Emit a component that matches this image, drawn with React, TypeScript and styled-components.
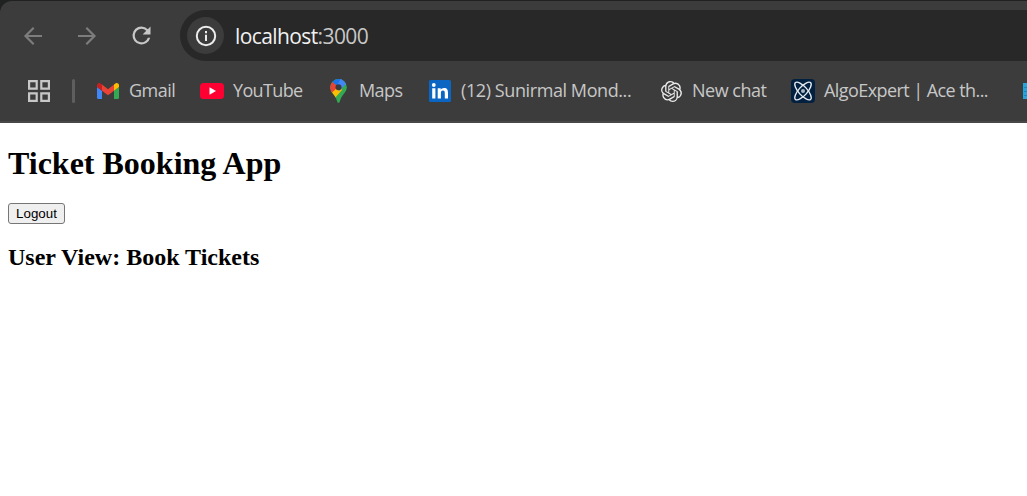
import React from "react";
import styled, { createGlobalStyle } from "styled-components";
import { SiOpenai } from "react-icons/si";

const GlobalStyle = createGlobalStyle`
  html, body { margin: 0; padding: 0; background: #fff; }
  body { overflow: hidden; }
`;

const Window = styled.div`
  width: 100%;
  height: 496px;
  overflow: hidden;
  background: #fff;
`;

const Frame = styled.header`
  height: 123px;
  padding-top: 1px;
  box-sizing: border-box;
  background: #202221;
`;

const Chrome = styled.div`
  height: 122px;
  box-sizing: border-box;
  border-radius: 12px 0 0 0;
  background: #3c3c3c;
  border-bottom: 2px solid #484848;
  overflow: hidden;
`;

const Toolbar = styled.div`
  display: flex;
  align-items: center;
  height: 51px;
  margin-top: 9px;
  padding-left: 20px;
`;

const NavButton = styled.span<{ $active?: boolean }>`
  display: flex;
  flex: none;
  align-items: center;
  justify-content: center;
  width: 26px;
  height: 26px;
  margin-right: 28px;
  color: ${(p) => (p.$active ? "#c7c7c7" : "#7d7d7d")};

  svg { flex: none; }
`;

const AddressBar = styled.div`
  display: flex;
  flex: 1;
  align-items: center;
  height: 51px;
  box-sizing: border-box;
  margin-left: -2px;
  padding-left: 7px;
  border-radius: 26px 0 0 26px;
  background: #282828;
`;

const InfoBadge = styled.span`
  display: flex;
  align-items: center;
  justify-content: center;
  width: 37px;
  height: 37px;
  border-radius: 50%;
  background: #3c3c3c;
`;

const Url = styled.span`
  margin-left: 11px;
  font: 21px/30px "Open Sans", "Noto Sans", sans-serif;
  letter-spacing: -0.6px;
  color: #c7c7c7;
  white-space: nowrap;
`;

const Host = styled.span`
  color: #f1f1f1;
`;

const BookmarksBar = styled.nav`
  display: flex;
  align-items: center;
  height: 60px;
  padding-left: 27px;

  svg { flex: none; }
`;

const Divider = styled.span`
  flex: none;
  width: 3px;
  height: 24px;
  margin: 0 21px;
  border-radius: 2px;
  background: #5e5e5e;
`;

const Bookmark = styled.span`
  display: flex;
  flex: none;
  align-items: center;
  margin-right: 25px;
`;

const IconSlot = styled.span`
  display: flex;
  flex: none;
  align-items: center;
  justify-content: center;
  width: 24px;
  height: 24px;
  margin-right: 9px;
  color: #e8e8e8;
`;

const Label = styled.span<{ $width: number; $spacing: number }>`
  width: ${(p) => p.$width}px;
  padding-bottom: 1px;
  font: 18px/25px "Open Sans", "Noto Sans", sans-serif;
  letter-spacing: ${(p) => p.$spacing}px;
  color: #c7c7c7;
  white-space: nowrap;
`;

const Page = styled.main`
  padding: 0 8px;
  color: #000;
  font-family: "Liberation Serif", "Times New Roman", serif;
`;

const Title = styled.h1`
  margin: 0;
  padding-top: 22px;
  font-size: 32px;
  line-height: 36px;
`;

const LogoutButton = styled.button`
  display: block;
  width: 57px;
  height: 21px;
  margin-top: 22px;
  padding: 0;
  border: 1px solid #767676;
  border-radius: 3px;
  background: #efefef;
  color: #000;
  font: 13.333px/17px "Liberation Sans", Arial, sans-serif;
`;

const Subtitle = styled.h2`
  margin: 20px 0 0;
  font-size: 24px;
  line-height: 27px;
`;

const Back = () => (
  <svg width="26" height="26" viewBox="0 0 26 26" fill="none" stroke="currentColor" strokeWidth="2.2">
    <path d="M22 13H5.5M13.7 4.8 5.5 13l8.2 8.2" />
  </svg>
);

const Forward = () => (
  <svg width="26" height="26" viewBox="0 0 26 26" fill="none" stroke="currentColor" strokeWidth="2.2">
    <path d="M4 13h16.500M12.300 4.800l8.200 8.200-8.200 8.200" />
  </svg>
);

const Reload = () => (
  <svg width="27" height="27" viewBox="0 0 24 24" fill="currentColor">
    <path d="M17.650 6.350A7.960 7.960 0 0 0 12 4a8 8 0 1 0 7.730 10h-2.080A6 6 0 1 1 12 6c1.660 0 3.140.690 4.220 1.780L13 11h7V4z" />
  </svg>
);

const Info = () => (
  <svg width="22" height="22" viewBox="0 0 22 22" fill="none" stroke="#ececec" strokeWidth="2">
    <circle cx="11" cy="11" r="9.200" />
    <path d="M11 9.800v6.200M11 6v2.200" />
  </svg>
);

const Apps = () => (
  <svg width="24" height="24" viewBox="0 0 24 24" fill="none" stroke="#c7c7c7" strokeWidth="2.200">
    <path d="M2.100 2.100h7.600v7.600H2.100zM14.300 2.100h7.600v7.600h-7.600zM2.100 14.300h7.600v7.600H2.100zM14.300 14.300h7.600v7.600h-7.600z" />
  </svg>
);

const Gmail = () => (
  <svg width="22" height="16" viewBox="0 0 22 16">
    <path fill="#4285f4" d="M0 4l5 3.700V16H1.500A1.500 1.500 0 0 1 0 14.500z" />
    <path fill="#34a853" d="M17 7.700L22 4v10.500a1.500 1.500 0 0 1-1.500 1.500H17z" />
    <path fill="#ea4335" d="M5 1.500l6 4.700 6-4.700v6.200l-6 4.500-6-4.500z" />
    <path fill="#fbbc04" d="M17 1.500l1.400-1C20 -.5 22 .500 22 2.400V4l-5 3.700z" />
    <path fill="#c5221f" d="M5 1.500L3.600.500C2-.5 0 .500 0 2.400V4l5 3.700z" />
  </svg>
);

const YouTube = () => (
  <svg width="24" height="16" viewBox="0 0 24 16">
    <rect width="24" height="16" rx="3.500" fill="#ff0033" />
    <path fill="#fff" d="M9.500 4.300l6.500 3.700-6.500 3.700z" />
  </svg>
);

const MapPin = () => (
  <svg width="17" height="24" viewBox="0 0 17 24">
    <defs>
      <clipPath id="pin">
        <path d="M8.500 0A8.300 8.300 0 0 0 .2 8.300c0 5.200 5.300 7.200 6.900 14 .5 2 2.300 2 2.800 0 1.600-6.800 6.900-8.800 6.900-14A8.300 8.300 0 0 0 8.500 0z" />
      </clipPath>
    </defs>
    <g clipPath="url(#pin)">
      <path fill="#34a853" d="M0 0h17v24H0z" />
      <path fill="#fbbc04" d="M0 14L8.500 4.500 12 11 4.500 19.500z" />
      <path fill="#ea4335" d="M0 0l2.300 2.900L8.500 7.500 1.600 14H0z" />
      <path fill="#1a73e8" d="M2 2.600l6.500 5.500L12 0H2z" />
      <path fill="#4285f4" d="M10.500 0H17v4L9 12 6.500 8z" />
    </g>
    <circle cx="8.500" cy="8.200" r="3" fill="#3c3c3c" />
  </svg>
);

const LinkedIn = () => (
  <svg width="22" height="22" viewBox="0 0 22 22">
    <rect width="22" height="22" rx="1.500" fill="#0a66c2" />
    <g fill="#fff">
      <circle cx="4.800" cy="5" r="1.900" />
      <path d="M3.200 8.200h3.200V18.500H3.200zM8.700 8.200h3v1.500c.6-1 1.800-1.800 3.400-1.800 3.200 0 3.900 2.100 3.900 4.900v5.700h-3.200v-5.100c0-1.500-.2-2.800-1.900-2.800s-2 1.300-2 2.700v5.200H8.700z" />
    </g>
  </svg>
);

const AlgoExpert = () => (
  <svg width="24" height="24" viewBox="0 0 24 24" fill="none">
    <rect width="24" height="24" rx="4" fill="#02203f" />
    <g stroke="#e4ebf1" strokeWidth="1.400">
      <ellipse cx="12" cy="12" rx="11.300" ry="4.300" transform="rotate(48 12 12)" />
      <ellipse cx="12" cy="12" rx="11.300" ry="4.300" transform="rotate(-48 12 12)" />
    </g>
    <circle cx="12" cy="12" r="2" fill="#a9b8c4" />
  </svg>
);

const Notes = () => (
  <svg width="24" height="16" viewBox="0 0 24 16">
    <path fill="#24a4dc" d="M0 0h24v16H0z" />
    <path stroke="#1688bd" d="M1 4.500h23M1 8.500h23M1 12.500h23" />
  </svg>
);

const bookmarks = [
  { icon: <Gmail />, label: "Gmail", width: 46, spacing: -0.5 },
  { icon: <YouTube />, label: "YouTube", width: 68, spacing: -0.65 },
  { icon: <MapPin />, label: "Maps", width: 44, spacing: -0.6 },
  { icon: <LinkedIn />, label: "(12) Sunirmal Mond...", width: 173, spacing: -0.41 },
  { icon: <SiOpenai size={21} />, label: "New chat", width: 74, spacing: -0.5 },
  { icon: <AlgoExpert />, label: "AlgoExpert | Ace th...", width: 174, spacing: -0.57 },
];

export default function App() {
  return (
    <Window>
      <GlobalStyle />
      <Frame>
        <Chrome>
          <Toolbar>
            <NavButton><Back /></NavButton>
            <NavButton><Forward /></NavButton>
            <NavButton $active><Reload /></NavButton>
            <AddressBar>
              <InfoBadge><Info /></InfoBadge>
              <Url><Host>localhost</Host>:3000</Url>
            </AddressBar>
          </Toolbar>
          <BookmarksBar>
            <Apps />
            <Divider />
            {bookmarks.map((b) => (
              <Bookmark key={b.label}>
                <IconSlot>{b.icon}</IconSlot>
                <Label $width={b.width} $spacing={b.spacing}>{b.label}</Label>
              </Bookmark>
            ))}
            <IconSlot><Notes /></IconSlot>
          </BookmarksBar>
        </Chrome>
      </Frame>
      <Page>
        <Title>Ticket Booking App</Title>
        <LogoutButton>Logout</LogoutButton>
        <Subtitle>User View: Book Tickets</Subtitle>
      </Page>
    </Window>
  );
}
